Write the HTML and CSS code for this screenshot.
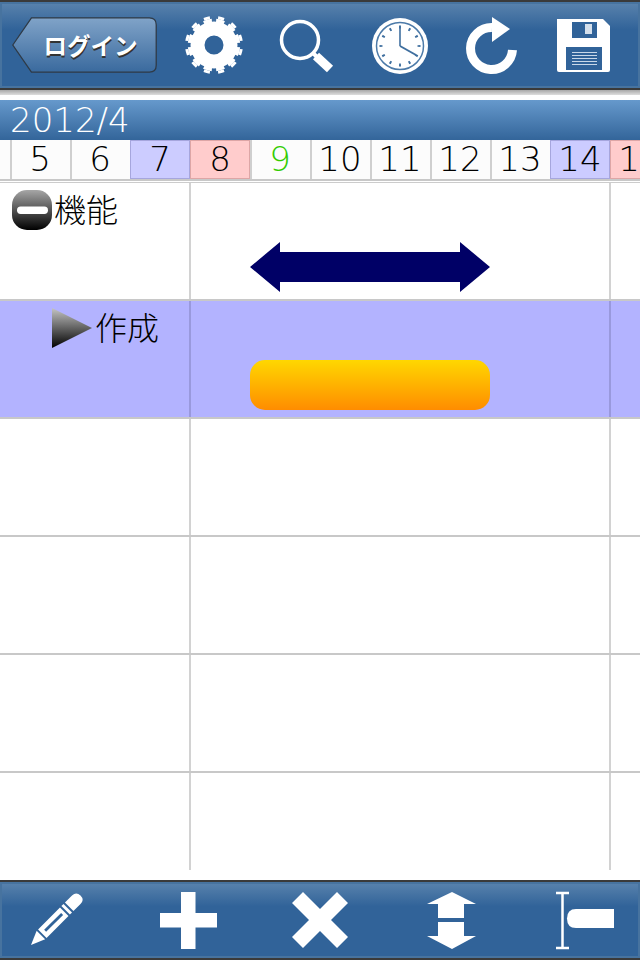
FILE: index.html
```html
<!DOCTYPE html>
<html lang="ja">
<head>
    <meta charset="UTF-8">
    <meta name="viewport" content="width=device-width, initial-scale=1.0">
    <title>ガントチャート</title>
    <link rel="stylesheet" href="styles.css">
</head>
<body>
    <!-- Top toolbar -->
    <header class="toolbar top-bar">
        <button class="back-btn">
            <svg class="back-shape" viewBox="0 0 148 57">
                <defs>
                    <linearGradient id="backFill" x1="0" y1="0" x2="0" y2="1">
                        <stop offset="0" stop-color="#80a3c8"/>
                        <stop offset="1" stop-color="#3a6a9e"/>
                    </linearGradient>
                </defs>
                <path d="M1 28.5 L20 1 H140 Q147 1 147 8 V49 Q147 56 140 56 H20 Z" fill="url(#backFill)" stroke="#2f3a46" stroke-width="1.3"/>
            </svg>
            <span>ログイン</span>
        </button>
        <div class="top-icons">
            <!-- gear -->
            <svg class="icon" viewBox="0 0 92 86">
                <circle cx="46" cy="43" r="16.500" fill="none" stroke="#fff" stroke-width="14"/>
                <circle cx="46" cy="43" r="24.500" fill="none" stroke="#fff" stroke-width="3.500" pathLength="24" stroke-dasharray="1.300 0.700" stroke-dashoffset="-0.350"/>
                <circle cx="46" cy="43" r="27.500" fill="none" stroke="#fff" stroke-width="3" pathLength="24" stroke-dasharray="0.850 1.150" stroke-dashoffset="-0.575"/>
            </svg>
            <!-- search -->
            <svg class="icon" viewBox="0 0 92 86">
                <circle cx="40" cy="38" r="18.500" fill="none" stroke="#fff" stroke-width="3.500"/>
                <path d="M53 51 L57 55" stroke="#fff" stroke-width="4"/>
                <path d="M56 54 L70 67" stroke="#fff" stroke-width="9"/>
            </svg>
            <!-- clock -->
            <svg class="icon" viewBox="0 0 92 86">
                <circle cx="48" cy="44" r="28" fill="#fff"/>
                <circle cx="48" cy="44" r="23.500" fill="none" stroke="#4c7aa8" stroke-width="1.500"/>
                <circle cx="48" cy="44" r="19" fill="none" stroke="#3f6f9f" stroke-width="3" pathLength="60" stroke-dasharray="1 4" stroke-dashoffset="0.500"/>
                <path d="M48 44 V25" stroke="#3f6f9f" stroke-width="1.600"/>
                <path d="M48 44 L64 53" stroke="#3f6f9f" stroke-width="2"/>
            </svg>
            <!-- redo -->
            <svg class="icon" viewBox="0 0 92 86">
                <path d="M48 25.500 A21 21 0 1 0 68.500 48" fill="none" stroke="#fff" stroke-width="9"/>
                <path d="M48 15 L66 27 L48 40 Z" fill="#fff"/>
            </svg>
            <!-- save -->
            <svg class="icon" viewBox="0 0 92 86">
                <path d="M21 17 H67 L74 24 V68 Q74 70 72 70 H23 Q21 70 21 68 Z" fill="#fff"/>
                <rect x="36" y="20" width="25" height="16" fill="#316399"/>
                <rect x="49" y="22" width="7" height="10" fill="#d5e0ec"/>
                <rect x="30" y="45" width="36" height="23" fill="#316399"/>
                <path d="M36 50.500 H61 M36 53.500 H61 M36 56.500 H61 M36 59.500 H61 M36 62.500 H61" stroke="#c9d8e8" stroke-width="1"/>
            </svg>
        </div>
    </header>
    <div class="top-shadow"></div>

    <div class="month-bar">2012/4</div>

    <!-- Day header -->
    <div class="days">
        <div class="day first"></div>
        <div class="day">5</div>
        <div class="day">6</div>
        <div class="day sat">7</div>
        <div class="day sun">8</div>
        <div class="day green">9</div>
        <div class="day">10</div>
        <div class="day">11</div>
        <div class="day">12</div>
        <div class="day">13</div>
        <div class="day sat">14</div>
        <div class="day sun">15</div>
    </div>

    <!-- Gantt rows -->
    <div class="gantt">
        <div class="row">
            <div class="name">
                <svg class="minus" viewBox="0 0 40 40">
                    <defs>
                        <linearGradient id="minusFill" x1="0" y1="0" x2="0" y2="1">
                            <stop offset="0" stop-color="#a6a6a6"/>
                            <stop offset="1" stop-color="#000"/>
                        </linearGradient>
                    </defs>
                    <rect width="40" height="40" rx="15" fill="url(#minusFill)"/>
                    <rect x="5" y="16.500" width="31" height="7.500" rx="3.700" fill="#fff"/>
                </svg>
                <span>機能</span>
            </div>
            <div class="timeline">
                <svg class="summary-arrow" viewBox="0 0 240 50">
                    <path d="M0 25 L30 0 V10 H210 V0 L240 25 L210 50 V40 H30 V50 Z" fill="#000066"/>
                </svg>
            </div>
            <div class="rest"></div>
        </div>
        <div class="row selected">
            <div class="name child">
                <svg class="arrow-right" viewBox="0 0 40 40">
                    <defs>
                        <linearGradient id="triFill" x1="0" y1="0" x2="0" y2="1">
                            <stop offset="0" stop-color="#c4c4c4"/>
                            <stop offset="1" stop-color="#000"/>
                        </linearGradient>
                    </defs>
                    <path d="M0 0 L40 20 L0 40 Z" fill="url(#triFill)"/>
                </svg>
                <span>作成</span>
            </div>
            <div class="timeline">
                <div class="task-bar"></div>
            </div>
            <div class="rest"></div>
        </div>
        <div class="row"><div class="name"></div><div class="timeline"></div><div class="rest"></div></div>
        <div class="row"><div class="name"></div><div class="timeline"></div><div class="rest"></div></div>
        <div class="row"><div class="name"></div><div class="timeline"></div><div class="rest"></div></div>
        <div class="row last"><div class="name"></div><div class="timeline"></div><div class="rest"></div></div>
    </div>

    <!-- Bottom toolbar -->
    <footer class="toolbar bottom-bar">
        <!-- pencil -->
        <svg class="icon" viewBox="0 0 60 60">
            <g transform="rotate(-45 5 55)" fill="#fff">
                <path d="M5 55 L19 49 V61 Z"/>
                <path d="M21 49 H52 V61 H21 Z M25 53.600 V56.400 H49 V53.600 Z" fill-rule="evenodd"/>
                <rect x="54" y="49" width="3" height="12"/>
                <path d="M59 49 H69 Q75 49 75 55 Q75 61 69 61 H59 Z"/>
            </g>
        </svg>
        <!-- plus -->
        <svg class="icon" viewBox="0 0 60 60">
            <path d="M23 2 H37.500 V23 H59 V37.500 H37.500 V59 H23 V37.500 H2 V23 H23 Z" fill="#fff"/>
        </svg>
        <!-- cross -->
        <svg class="icon" viewBox="0 0 60 60">
            <path d="M13 2 L30 19 L47 2 L58 13 L41 30 L58 47 L47 58 L30 41 L13 58 L2 47 L19 30 L2 13 Z" fill="#fff"/>
        </svg>
        <!-- move up/down -->
        <svg class="icon" viewBox="0 0 60 60">
            <path d="M30 2 L54 14 H42 V28 H16 V14 H5 Z" fill="#fff"/>
            <path d="M16 32 H42 V46 H54 L30 59 L5 46 H16 Z" fill="#fff"/>
        </svg>
        <!-- bar end -->
        <svg class="icon" viewBox="0 0 60 60">
            <path d="M2 3 H15 M2 58 H15 M8.500 3 V58" fill="none" stroke="#fff" stroke-width="2.500"/>
            <path d="M22 19 H60 V38 H22 Q13 38 13 28.500 Q13 19 22 19 Z" fill="#fff"/>
        </svg>
    </footer>
</body>
</html>
```

FILE: styles.css
```css
/* Basic Reset */
* {
    margin: 0;
    padding: 0;
    box-sizing: border-box;
}

html, body {
    height: 100%;
}

body {
    width: 640px;
    height: 960px;
    overflow: hidden;
    background: #fff;
    color: #000;
    display: flex;
    flex-direction: column;
    font-family: "Noto Sans CJK JP", "Noto Sans", sans-serif;
}

/* Toolbars */
.toolbar {
    display: flex;
    align-items: center;
    border: 2px solid #3a3a3a;
    border-left: 0;
    border-right: 0;
    box-shadow: inset 0 0 0 2px #47739f;
    background: linear-gradient(#5a83ad, #316399 32%, #316399);
    flex-shrink: 0;
}

.top-bar {
    height: 90px;
    padding-left: 11px;
}

.top-shadow {
    height: 5px;
    margin-bottom: 5px;
    background: linear-gradient(#a8a8a8, #dedede);
    flex-shrink: 0;
}

.bottom-bar {
    height: 80px;
    margin-top: 10px;
    padding: 0 26px;
    justify-content: space-between;
}

.bottom-bar .icon {
    width: 60px;
    height: 60px;
}

.top-icons {
    display: flex;
    margin-left: 10px;
}

.top-icons .icon {
    width: 92px;
    height: 86px;
}

.back-btn {
    position: relative;
    width: 147px;
    height: 56px;
    flex-shrink: 0;
    border: none;
    background: none;
    color: #fff;
    font-family: inherit;
    font-size: 23.500px;
    font-weight: 700;
}

.back-shape {
    position: absolute;
    top: 0;
    left: 0;
    width: 100%;
    height: 100%;
}

.back-btn span {
    position: relative;
    left: 6px;
    text-shadow: 0.5px 1.500px 0 #333;
}

/* Month bar */
.month-bar {
    height: 40px;
    padding-left: 10px;
    color: #fff;
    font-family: "DejaVu Sans", sans-serif;
    font-size: 34px;
    font-weight: 200;
    line-height: 40px;
    background: linear-gradient(#6699cc, #33659a);
    flex-shrink: 0;
}

/* Day header */
.days {
    display: flex;
    height: 41px;
    border-bottom: 2px solid #c8c8c8;
    overflow: hidden;
    flex-shrink: 0;
}

.day {
    flex: 0 0 60px;
    height: 39px;
    padding-right: 2px;
    border-left: 2px solid #cfcfcf;
    background: #fcfcfc;
    font-family: "DejaVu Sans", sans-serif;
    font-size: 34px;
    font-weight: 200;
    line-height: 39px;
    text-align: center;
}

.day.first {
    flex-basis: 10px;
    padding-right: 0;
    border-left: 0;
}

.day.sat {
    padding-right: 0;
    background: #ccccff;
    box-shadow: inset 0 0 0 1px #a6a6dd;
    border-left: 0;
}

.day.sun {
    padding-right: 0;
    background: #ffcccc;
    box-shadow: inset 0 0 0 1px #dda6a6;
    border-left: 0;
}

.day.green {
    color: #33cc00;
}

/* Gantt rows */
.gantt {
    flex: 1;
    margin-top: 1px;
    border-top: 1px solid #ccc;
}

.row {
    display: grid;
    grid-template-columns: 191px 420px 29px;
    height: 118px;
    border-bottom: 2px solid #c8c8c8;
}

.row.last {
    height: 97px;
    border-bottom: 0;
}

.row.selected {
    background: #b3b3ff;
}

.name {
    display: flex;
    align-items: flex-start;
    padding: 7px 0 0 12px;
    border-right: 2px solid #d2d2d2;
    font-size: 32px;
    font-weight: 300;
    line-height: 36px;
}

.name.child {
    padding-left: 52px;
}

.timeline {
    display: flex;
    align-items: flex-end;
    padding: 0 0 7px 59px;
    border-right: 2px solid #d2d2d2;
}

.selected .name,
.selected .timeline {
    border-right-color: #9999dd;
}

.minus,
.arrow-right {
    width: 40px;
    height: 40px;
    flex-shrink: 0;
    margin-right: 3px;
}

.minus {
    margin-right: 2px;
}

.summary-arrow {
    display: block;
    width: 240px;
    height: 50px;
}

.task-bar {
    width: 240px;
    height: 50px;
    border-radius: 15px;
    background: linear-gradient(#ffd700, #ff8c00);
}
```
